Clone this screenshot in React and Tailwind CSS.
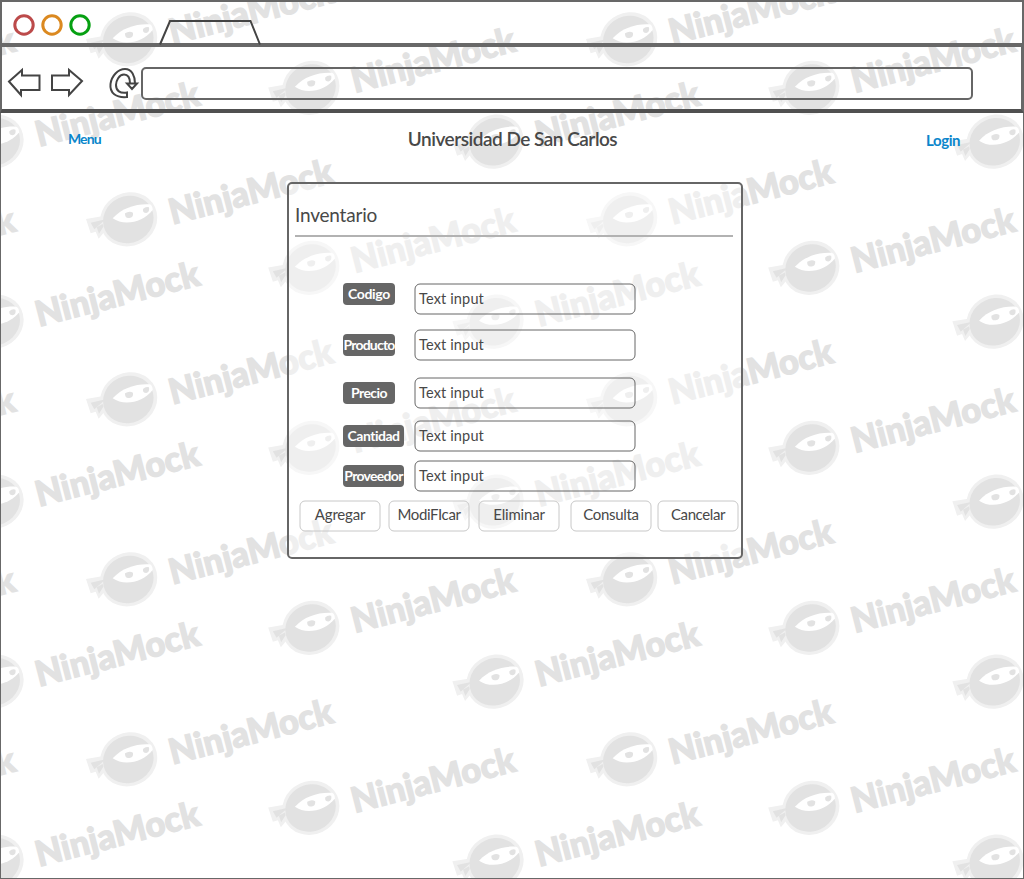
import React from "react";

const BRANDS = [-90, 90, 270, 450, 630, 810].flatMap((row) =>
  [-500, 0, 500].flatMap((column) => [
    [column, row],
    [column + 182.2, row + 48.5],
    [column + 366.4, row + 102.3 - 180],
  ])
).filter(([x, y]) => x > -336 && y > -140 && y < 790);

function Brand({ x, y }) {
  return (
    <g transform={`translate(${x} ${y})`}>
      <g transform="scale(0.33333)">
        <path d="M258 387L306 379L328 400L316 422L296 446L287 425L272 430Z" fill="#f0f0f0" />
        <ellipse cx="386" cy="388" rx="87" ry="80" transform="rotate(-25 386 388)" fill="#f0f0f0" />
        <ellipse cx="385" cy="388.5" rx="77" ry="70" transform="rotate(-25 385 388.5)" fill="#e2e2e2" />
        <path d="M272 398L317 388L308 396L283 418ZM290 412L308 402L310 410L297 431Z" fill="#e2e2e2" />
        <path d="M338 385C366 354 408 341 448 343Q458 345 458 360C430 397 372 409 338 385Z" fill="#fff" />
        <path d="M375 370Q388 362 399 368Q401 382 388 384Q374 386 375 370ZM429 357Q437 349 447 352Q450 366 439 369Q427 369 429 357Z" fill="#e2e2e2" />
      </g>
      <text
        transform="translate(172.5 134.5) rotate(-14.5)"
        fontSize="35"
        fontWeight="900"
        textLength="168"
        lengthAdjust="spacingAndGlyphs"
        fill="#e2e2e2"
        stroke="#e2e2e2"
        strokeWidth="1.3"
        className="font-[Lato,sans-serif]"
      >
        NinjaMock
      </text>
    </g>
  );
}

function Watermark() {
  return (
    <svg className="pointer-events-none absolute inset-0 -z-10" width="1024" height="879" aria-hidden="true">
      {BRANDS.map(([x, y]) => (
        <Brand key={`${x}-${y}`} x={x} y={y} />
      ))}
    </svg>
  );
}

function Outline({ width, height, stroke }) {
  return (
    <svg className="absolute inset-0" width={width} height={height} fill="none" stroke={stroke}>
      <rect x="1" y="1" width={width - 2} height={height - 2} rx="5" />
    </svg>
  );
}

const FIELDS = [
  { name: "Codigo", row: "mt-[46px]", tag: "mt-0 w-[52px]", text: "tracking-[-0.35px]" },
  { name: "Producto", row: "mt-[14px]", tag: "mt-[5px] w-[52px]", text: "tracking-[-0.8px]" },
  { name: "Precio", row: "mt-[16px]", tag: "mt-[5px] w-[52px]", text: "tracking-[-0.6px]" },
  { name: "Cantidad", row: "mt-[11px]", tag: "mt-[5px] w-[61px]", text: "tracking-[-0.5px]" },
  { name: "Proveedor", row: "mt-[8px]", tag: "mt-[5px] w-[61px]", text: "tracking-[-0.7px]" },
];

const ACTIONS = [
  { name: "Agregar", gap: "ml-[10px]", text: "tracking-[-0.2px]" },
  { name: "ModiFIcar", gap: "ml-[7px]", text: "tracking-[-0.4px]" },
  { name: "Eliminar", gap: "ml-[8px]", text: "tracking-[-0.2px]" },
  { name: "Consulta", gap: "ml-[10px]", text: "tracking-[-0.3px]" },
  { name: "Cancelar", gap: "ml-[5px]", text: "tracking-[-0.4px]" },
];

function TitleBar() {
  return (
    <div className="h-[47px] border-b-4 border-l-2 border-r-2 border-t-2 border-[#686868]">
      <svg className="-ml-0.5 -mt-0.5 block" width="300" height="45" fill="none">
        <g strokeWidth="3">
          <circle cx="24" cy="25" r="9.2" stroke="#bc4a4a" />
          <circle cx="52" cy="25" r="9.2" stroke="#db8920" />
          <circle cx="80" cy="25" r="9.2" stroke="#06a012" />
        </g>
        <path d="M160 44.500L170 21H250.500L260 44.500" stroke="#444" strokeWidth="2" />
      </svg>
    </div>
  );
}

function Toolbar() {
  return (
    <div className="flex h-[66px] border-b-4 border-l-2 border-r-[3px] border-b-[#505050] border-l-[#686868] border-r-[#686868]">
      <svg className="-ml-0.5 block shrink-0" width="141" height="62" viewBox="0 47 141 62" fill="none" stroke="#444" strokeWidth="2">
        <path d="M9 81.500L22 70V75.500H39.500V90H21V95Z" />
        <path d="M82 81L69 70V75.500H52V90H69V95Z" />
        <path d="M127 92.500V97C116 98 109.500 93 110.500 84C111.500 76 118 69 125 69C132 69 135 76 135 83.500H137L132 89L127 83.500H130C130 78 128 74.500 124 74.500C119 74.500 116 81 116 85C116 91 120 93.500 127 92.500ZM130 83.500H135" />
      </svg>
      <div className="mt-5 h-[33px] w-[832px] rounded-[5px] border-2 border-[#666]" />
    </div>
  );
}

export default function App() {
  return (
    <div className="relative isolate h-[879px] w-[1024px] overflow-hidden bg-white font-[Lato,sans-serif] text-[#484848]">
      <Watermark />
      <TitleBar />
      <Toolbar />
      <main className="h-[766px] border-b border-l border-r border-[#686868]">
        <header className="flex h-[69px] justify-between pl-[67px] pr-[62px] pt-[14px] font-bold">
          <a className="mt-0.5 w-[33px] whitespace-nowrap text-[14px] leading-5 tracking-[-0.9px] text-[#0b86cb]">Menu</a>
          <h1 className="-ml-0.5 whitespace-nowrap text-[19px] font-semibold leading-6 tracking-[-0.5px]">Universidad De San Carlos</h1>
          <a className="mt-[3px] w-[35px] whitespace-nowrap text-[15px] leading-5 tracking-[-0.4px] text-[#0b86cb]">Login</a>
        </header>
        <section className="ml-[286px] h-[377px] w-[456px] rounded-[5px] border-2 border-[#666] bg-white/45">
          <h2 className="ml-[6px] mr-2 h-[53px] border-b-2 border-[#b2b2b2] pt-[19px] text-[19px] leading-6 tracking-[-0.2px]">Inventario</h2>
          {FIELDS.map(({ name, row, tag, text }) => (
            <div key={name} className={`flex h-8 w-[347px] justify-between pl-[54px] ${row}`}>
              <label className={`flex h-[22px] items-center justify-center whitespace-nowrap rounded-[4px] bg-[#666] pb-px text-[14px] font-bold leading-5 text-white ${tag} ${text}`}>
                {name}
              </label>
              <div className="relative h-8 w-[222px] pl-[5px] pt-[6px] text-[14.5px] leading-5 tracking-[0.15px]">
                <Outline width={222} height={32} stroke="#666" />
                Text input
              </div>
            </div>
          ))}
          <div className="mt-2 flex">
            {ACTIONS.map(({ name, gap, text }) => (
              <button key={name} className={`relative h-8 w-[82px] shrink-0 whitespace-nowrap pb-1 text-[15px] leading-5 ${gap} ${text}`}>
                <Outline width={82} height={32} stroke="#c8c8c8" />
                {name}
              </button>
            ))}
          </div>
        </section>
      </main>
    </div>
  );
}
